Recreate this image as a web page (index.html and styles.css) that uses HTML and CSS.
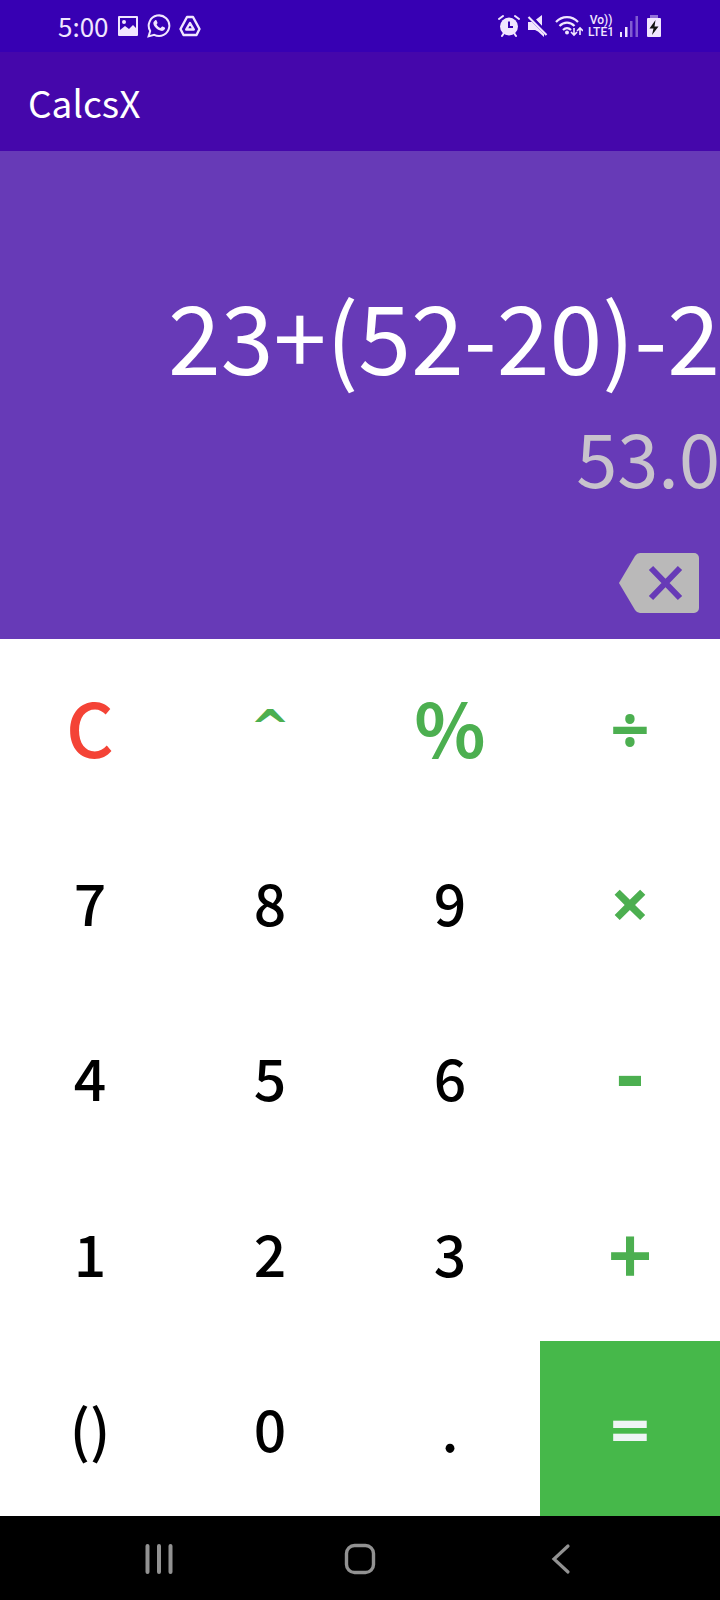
FILE: index.html
```html
<!DOCTYPE html>
<html lang="en">
<head>
<meta charset="utf-8">
<meta name="viewport" content="width=device-width, initial-scale=1">
<title>CalcsX</title>
<link rel="stylesheet" href="styles.css">
</head>
<body>
<div class="app">
  <div class="status">
    <div class="status-left">
      <span class="clock">5:00</span>
      <svg width="22" height="22" viewBox="0 0 22 22" aria-hidden="true"><path fill="currentColor" fill-rule="evenodd" d="M2 1h18a1 1 0 0 1 1 1v18a1 1 0 0 1-1 1H2a1 1 0 0 1-1-1V2a1 1 0 0 1 1-1zM3 3v12l5-4 4 3 4-4 3 3V3zM5 7a2 2 0 1 0 4 0a2 2 0 1 0-4 0z"/></svg>
      <svg width="24" height="24" viewBox="0 0 24 24" aria-hidden="true"><path fill="none" stroke="currentColor" stroke-width="2" d="M1.600 22.400 3.200 17a10.300 10.300 0 1 1 4 3.800z"/><path fill="currentColor" d="M8 6.500c.6-.6 1.300-.6 1.600.1l.9 2.100c.1.400 0 .7-.9 1.700.9 1.700 2.200 2.900 4 3.700l1.200-1.400c.3-.3.500-.3.900-.1l2 1c.5.300.5.500.3 1.200-.5 1.500-2.300 2.400-4 2-3.800-.9-6.900-4-7.600-7-.3-1.300.5-2.400 1.600-3.300z"/></svg>
      <svg width="22" height="22" viewBox="0 0 22 22" aria-hidden="true"><g fill="none" stroke="currentColor" stroke-width="2.400" stroke-linejoin="round"><path d="M8 2h6l6.500 12-3 6h-13l-3-6z"/><path d="M11 8l3.800 6.500H7.200z"/></g></svg>
    </div>
    <div class="status-right">
      <svg width="24" height="24" viewBox="0 0 24 24" aria-hidden="true"><g stroke="currentColor" stroke-width="2" stroke-linecap="round"><path d="M2 5l4-3M18 2l4 3M5 22l2-3M19 22l-2-3"/></g><circle cx="12" cy="12.500" r="9" fill="currentColor"/><path d="M12 7.500V13h4" fill="none" stroke="#3700b3" stroke-width="2"/></svg>
      <svg width="24" height="24" viewBox="0 0 24 24" aria-hidden="true"><path fill="currentColor" d="M2 8h4l12 12v3l-6-5.500L9 16H2zM10 5.500 16 1v11z"/><path d="M2.500 3l18 18" stroke="currentColor" stroke-width="2.200"/><path d="M4.500 1.800l18 18" stroke="#3700b3" stroke-width="1.600"/></svg>
      <svg width="28" height="24" viewBox="0 0 28 24" aria-hidden="true"><g fill="none" stroke="currentColor" stroke-width="2.200"><path d="M1 8c6-6.500 16-6.500 22 0M4.500 12c4.500-4.500 10.500-4.500 15 0M8 16c2.500-2.500 5.500-2.500 8 0"/></g><circle cx="12" cy="18.500" r="2" fill="currentColor"/><path d="M19 14v7m-3-3 3 3 3-3M25 21v-7m-3 3 3-3 3 3" fill="none" stroke="currentColor" stroke-width="1.600"/></svg>
      <span class="volte"><span>Vo))</span><span>LTE1</span></span>
      <svg width="20" height="22" viewBox="0 0 20 22" aria-hidden="true"><g fill="currentColor"><path d="M1 17h2v5H1zM6 12h2.500v10H6z"/><path opacity=".4" d="M11 6h2.500v16H11zM16.500 1H19v21h-2.500z"/></g></svg>
      <svg class="battery" width="16" height="22" viewBox="0 0 16 22" aria-hidden="true"><path fill="currentColor" opacity=".5" d="M4 0h8v4H4z"/><rect x="1" y="3" width="14" height="19" rx="1" fill="currentColor"/><path fill="#111" d="M9.500 5 3.500 13.500h4L6 20l6.500-8.500h-4z"/></svg>
    </div>
  </div>
  <header class="bar"><h1 class="title">CalcsX</h1></header>
  <section class="display">
    <output class="expression">23+(52-20)-2</output>
    <output class="result">53.0</output>
    <button class="erase" type="button" aria-label="Backspace">
      <svg width="82" height="62" viewBox="0 0 82 62" aria-hidden="true"><path fill="#bab9b9" d="M22 1h54a5 5 0 0 1 5 5v50a5 5 0 0 1-5 5H22q-3 0-5-3L1 31 17 4q2-3 5-3z"/><path d="M33 16l29 30M62 16 33 46" stroke="#673ab7" stroke-width="6"/></svg>
    </button>
  </section>
  <main class="keys">
    <button class="key big clear" type="button">C</button>
    <button class="key op caret" type="button">^</button>
    <button class="key big op" type="button">%</button>
    <button class="key op math" type="button">÷</button>
    <button class="key" type="button">7</button>
    <button class="key" type="button">8</button>
    <button class="key" type="button">9</button>
    <button class="key op math" type="button">×</button>
    <button class="key" type="button">4</button>
    <button class="key" type="button">5</button>
    <button class="key" type="button">6</button>
    <button class="key op minus" type="button">-</button>
    <button class="key" type="button">1</button>
    <button class="key" type="button">2</button>
    <button class="key" type="button">3</button>
    <button class="key big op" type="button">+</button>
    <button class="key" type="button">()</button>
    <button class="key" type="button">0</button>
    <button class="key" type="button">.</button>
    <button class="key math equals" type="button">=</button>
  </main>
  <nav class="nav">
    <button class="nav-btn" type="button" aria-label="Recent apps"><svg width="32" height="32" viewBox="0 0 32 32" aria-hidden="true"><path d="M4.500 3v26M16 3v26M27.500 3v26" stroke="currentColor" stroke-width="4" stroke-linecap="round"/></svg></button>
    <button class="nav-btn" type="button" aria-label="Home"><svg width="32" height="32" viewBox="0 0 32 32" aria-hidden="true"><rect x="2.500" y="2.500" width="27" height="27" rx="8" fill="none" stroke="currentColor" stroke-width="3.400"/></svg></button>
    <button class="nav-btn" type="button" aria-label="Back"><svg width="32" height="32" viewBox="0 0 32 32" aria-hidden="true"><path d="M23 3 9 16l14 13" fill="none" stroke="currentColor" stroke-width="3.200" stroke-linecap="round"/></svg></button>
  </nav>
</div>
</body>
</html>
```
FILE: styles.css
```css
* { box-sizing: border-box; }

body {
  margin: 0;
  font-family: "Noto Sans CJK JP", "Noto Sans", sans-serif;
}

button {
  margin: 0;
  padding: 0;
  border: 0;
  background: none;
  font: inherit;
  color: inherit;
  cursor: pointer;
}

svg { display: block; }

.app {
  display: flex;
  flex-direction: column;
  min-height: 100vh;
  background: #fff;
}

.status {
  display: flex;
  justify-content: space-between;
  align-items: center;
  height: 52px;
  padding: 0 58px;
  background: #3700b3;
  color: #f1e6ff;
}

.status-left,
.status-right {
  display: flex;
  align-items: center;
  gap: 8px;
}

.status-right { gap: 5px; }
.battery { margin-left: 2px; }

.clock {
  font-size: 26px;
  line-height: 32px;
}

.volte {
  display: flex;
  flex-direction: column;
  align-items: center;
  font: 500 12px/12px Roboto, sans-serif;
}

.bar {
  display: flex;
  align-items: center;
  height: 99px;
  padding: 0 28px;
  background: #4507ab;
  color: #fff;
}

.title {
  margin: 0;
  font-size: 37px;
  font-weight: 400;
  line-height: 48px;
}

.display {
  display: flex;
  flex-direction: column;
  justify-content: flex-end;
  align-items: flex-end;
  height: 488px;
  padding-bottom: 25px;
  background: #673ab7;
  color: #fff;
  overflow: hidden;
  white-space: nowrap;
}

.expression {
  font-size: 95px;
  line-height: 132px;
}

.result {
  font-size: 74px;
  line-height: 112px;
  color: #c8c3cc;
}

.erase { margin: 40px 20px 0 0; }

.keys {
  flex: 1;
  display: grid;
  grid-template-columns: repeat(4, 1fr);
  grid-auto-rows: 1fr;
}

.key {
  padding-bottom: 2px;
  font-size: 57px;
  font-weight: 500;
  line-height: 80px;
  color: #000;
}

.big { font-size: 74px; }
.clear { color: #f44336; }

.op {
  font-weight: 700;
  color: #4caf50;
}

.math {
  padding-bottom: 0;
  font-family: "Noto Sans", sans-serif;
  font-size: 69px;
}

.caret {
  padding-bottom: 0;
  font-family: "DejaVu Sans", sans-serif;
  font-size: 48px;
}

.minus {
  font-family: "DejaVu Sans", sans-serif;
  font-size: 72px;
}

.equals {
  background: #46b84a;
  font-weight: 700;
  color: #eef4f4;
}

.nav {
  display: flex;
  justify-content: space-around;
  align-items: center;
  height: 84px;
  padding: 2px 58px 0;
  background: #000;
  color: #929292;
}

.nav-btn { padding: 12px; }
```
